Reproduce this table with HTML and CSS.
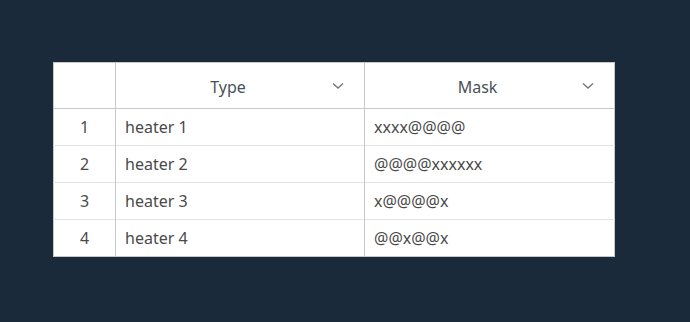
FILE: index.html
```html
<!DOCTYPE html>
<html>
<head>
<meta charset="utf-8">
<link rel="stylesheet" href="styles.css">
</head>
<body>
<div class="page">
  <table class="grid">
    <thead>
      <tr>
        <th class="idx"></th>
        <th class="col-type"><span class="label">Type</span><svg class="chev" width="12" height="8" viewBox="0 0 12 8"><path d="M1 1.5 L6 6 L11 1.5" fill="none" stroke="#777" stroke-width="1.4"/></svg></th>
        <th class="col-mask"><span class="label">Mask</span><svg class="chev" width="12" height="8" viewBox="0 0 12 8"><path d="M1 1.5 L6 6 L11 1.5" fill="none" stroke="#777" stroke-width="1.4"/></svg></th>
      </tr>
    </thead>
    <tbody>
      <tr><td class="idx">1</td><td>heater 1</td><td>xxxx@@@@</td></tr>
      <tr><td class="idx">2</td><td>heater 2</td><td>@@@@xxxxxx</td></tr>
      <tr><td class="idx">3</td><td>heater 3</td><td>x@@@@x</td></tr>
      <tr><td class="idx">4</td><td>heater 4</td><td>@@x@@x</td></tr>
    </tbody>
  </table>
</div>
</body>
</html>
```
FILE: styles.css
```css
html, body {
  margin: 0;
  padding: 0;
  background: #1b2a3a;
  height: 100%;
}
.page {
  padding: 62px 0 0 53px;
}
.grid {
  border-collapse: collapse;
  background: #fff;
  font-family: "Noto Sans", "Open Sans", sans-serif;
  font-size: 16px;
  color: #4a4a4a;
  border: 1px solid #c8c8c8;
}
.grid th {
  height: 43px;
  padding: 2px 24px 0 0;
  font-weight: normal;
  color: #4a5058;
  position: relative;
  border-left: 1px solid #c8c8c8;
  border-bottom: 1px solid #c8c8c8;
  text-align: center;
}
.grid th.idx { width: 61px; border-left: none; padding: 2px 0 0 0; }
.grid th.col-type { width: 224px; }
.grid th.col-mask { width: 225px; }
.grid th .label {
  display: inline-block;
}
.grid th .chev {
  position: absolute;
  right: 20px;
  top: 19px;
}
.grid td {
  height: 36px;
  padding: 0 0 0 9px;
  border-left: 1px solid #c8c8c8;
  border-top: 1px solid #e4e4e4;
  line-height: 36px;
}
.grid tbody tr:first-child td { border-top: none; }
.grid td.idx {
  border-left: none;
  text-align: center;
  padding: 0;
}
```
